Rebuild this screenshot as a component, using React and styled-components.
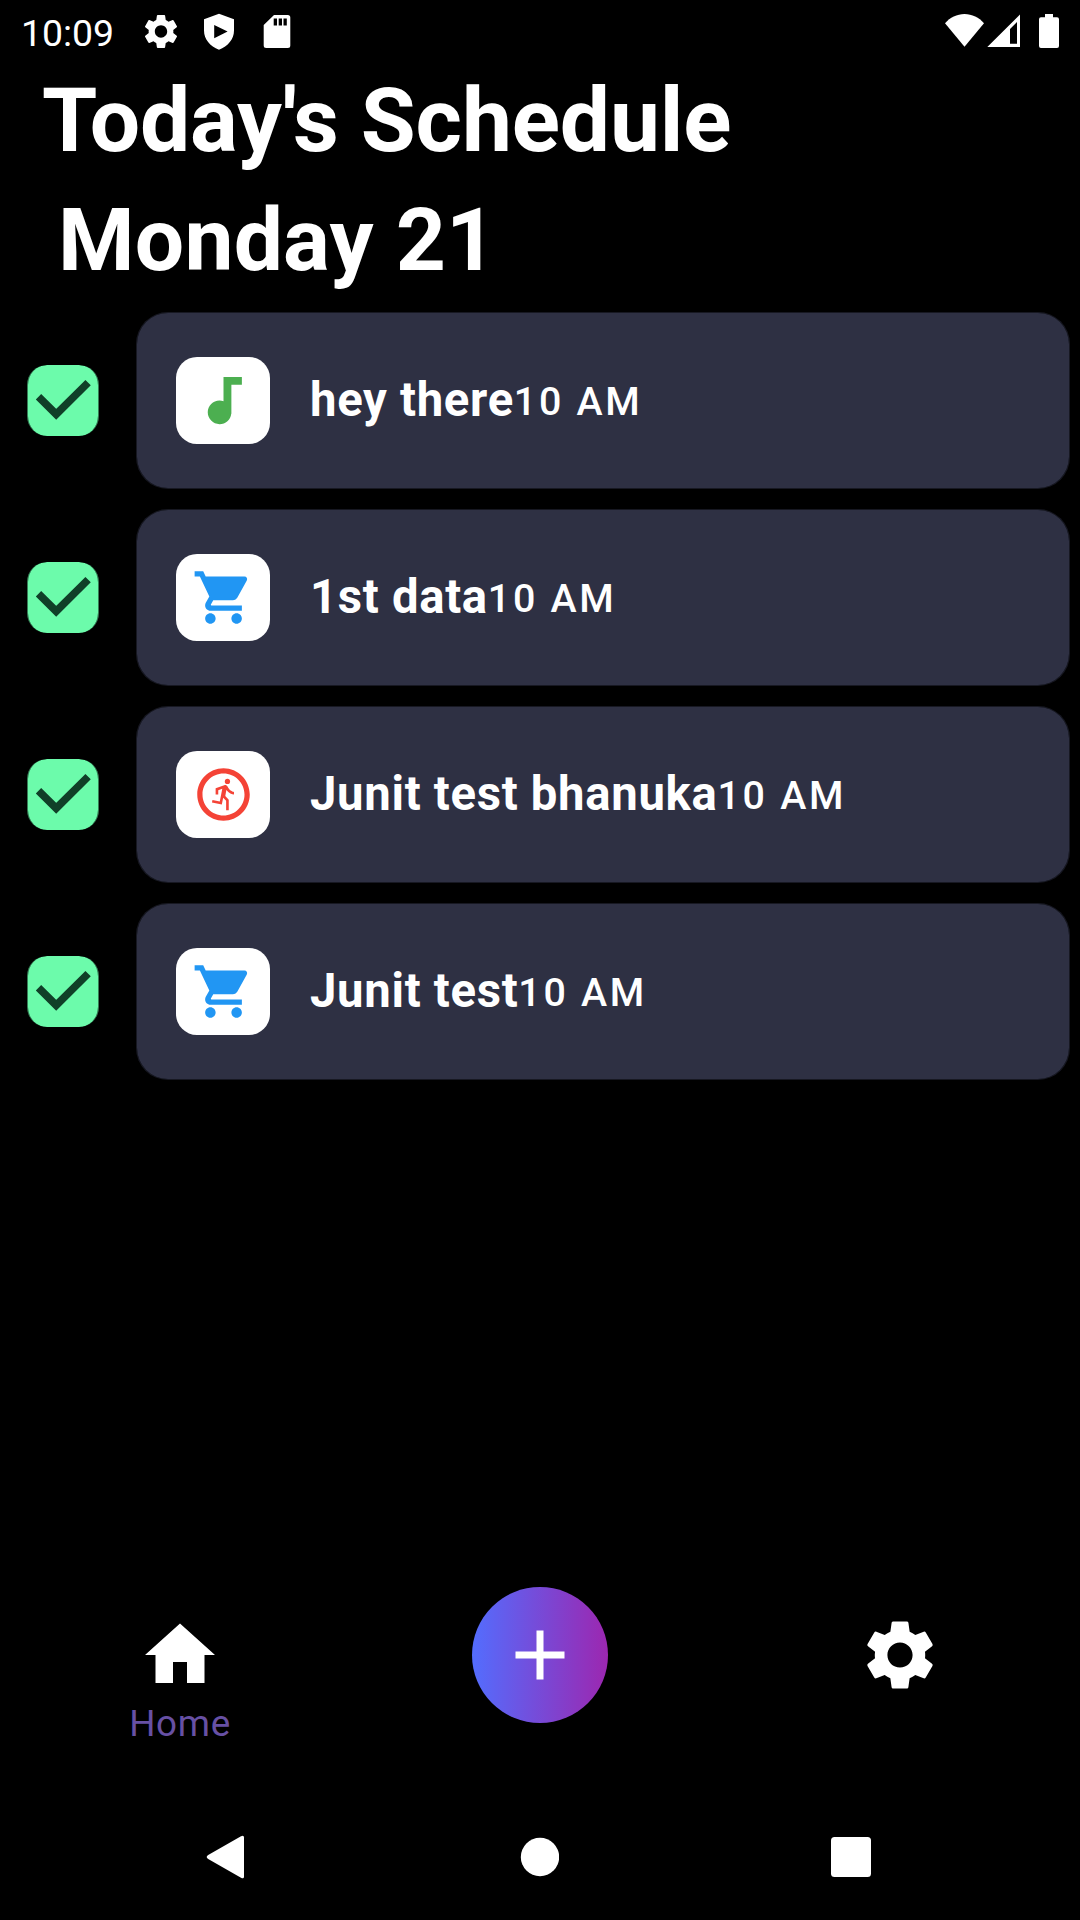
import React from "react";
import styled, { createGlobalStyle } from "styled-components";
import {
  MdAdd,
  MdAudiotrack,
  MdOutlineRunCircle,
  MdSettings,
  MdShoppingCart,
} from "react-icons/md";

const GlobalStyle = createGlobalStyle`
  *, *::before, *::after { box-sizing: border-box; }
  body { margin: 0; background: #000; }
  svg { display: block; flex: none; }
`;

const Screen = styled.div`
  width: 1080px;
  height: 1920px;
  display: flex;
  flex-direction: column;
  overflow: hidden;
  background: #000;
  color: #fff;
  font-family: Roboto, "Noto Sans", sans-serif;
`;

const StatusBar = styled.header`
  height: 63px;
  padding: 0 20px 0 21px;
  display: flex;
  justify-content: space-between;
`;

const StatusGroup = styled.div`
  display: flex;
  height: 63px;
`;

const Clock = styled.span`
  width: 119px;
  font-size: 37.4px;
  line-height: 67px;
  white-space: nowrap;
`;

const Heading = styled.h1`
  margin: 0;
  height: ${(p) => p.$height}px;
  padding-left: ${(p) => p.$inset}px;
  font-size: ${(p) => p.$size}px;
  line-height: ${(p) => p.$line}px;
  letter-spacing: ${(p) => p.$tracking}px;
  font-weight: 700;
  white-space: nowrap;
`;

const TaskList = styled.ul`
  margin: 0;
  padding: 12px 10px 0 27px;
  list-style: none;
  flex: 1;
  display: flex;
  flex-direction: column;
  gap: 20px;
`;

const TaskRow = styled.li`
  height: 177px;
  display: flex;
  align-items: center;
  gap: 37px;
`;

const CheckBox = styled.span`
  flex: none;
  width: 72px;
  height: 71px;
  border: 0 solid rgba(108, 251, 171, 0.5);
  border-width: 0 1px;
  border-radius: 20px;
  background: #6cfbab;
  background-clip: padding-box;
`;

const TaskCard = styled.div`
  flex: 1;
  height: 177px;
  padding-left: 39px;
  border: 1px solid rgba(46, 48, 67, 0.5);
  border-radius: 32px;
  background: #2e3043;
  background-clip: padding-box;
  display: flex;
  align-items: center;
`;

const IconTile = styled.span`
  flex: none;
  width: 94.4px;
  height: 86.6px;
  margin-right: 39.6px;
  border-radius: 21px;
  background: #fff;
  color: ${(p) => p.$color};
  display: flex;
  align-items: center;
  justify-content: center;
`;

const TaskName = styled.span`
  font-size: 47.25px;
  line-height: 56px;
  padding-bottom: 2px;
  font-weight: 700;
  letter-spacing: 0.7px;
  white-space: pre;
`;

const TaskTime = styled.span`
  font-size: 39.4px;
  line-height: 48px;
  padding-top: 2px;
  font-weight: 500;
  letter-spacing: 2.7px;
  white-space: pre;
`;

const BottomBar = styled.nav`
  height: 209px;
  display: grid;
  grid-template-columns: repeat(3, 360px);
  justify-items: center;
`;

const BarItem = styled.button`
  height: 209px;
  border: 0;
  padding: 28px 0 0;
  background: none;
  color: #fff;
  font-family: inherit;
  display: flex;
  flex-direction: column;
  align-items: center;
`;

const BarLabel = styled.span`
  font-size: 36.75px;
  line-height: 44px;
  margin-top: 5px;
  letter-spacing: 0.7px;
  color: #6750a4;
`;

const AddButton = styled.button`
  width: 136.5px;
  height: 136.5px;
  margin-top: 1.5px;
  border: 0;
  border-radius: 50%;
  padding: 0;
  background: linear-gradient(90deg, #536dfe, #9c27b0);
  color: #fff;
  display: flex;
  align-items: center;
  justify-content: center;
`;

const SystemNav = styled.footer`
  height: 126px;
  padding: 0 206px;
  display: flex;
  align-items: center;
  justify-content: space-between;
`;

const TASKS = [
  { name: "hey there", time: "10 AM", Icon: MdAudiotrack, color: "#4caf50" },
  { name: "1st data", time: "10 AM", Icon: MdShoppingCart, color: "#2196f3" },
  { name: "Junit test bhanuka", time: "10 AM", Icon: MdOutlineRunCircle, color: "#f44336" },
  { name: "Junit test", time: "10 AM", Icon: MdShoppingCart, color: "#2196f3" },
];

function StatusIcons() {
  return (
    <svg width="160" height="63" viewBox="140 0 160 63" fill="#fff">
      <MdSettings x="140.4" y="10.9" size="41.2" />
      <path
        fillRule="evenodd"
        d="M219 13.7L234 19.3V30.5C234 39 228 46.5 219 49.7C210 46.5 204 39 204 30.5V19.3ZM214.2 25V38.3L227.6 31.6Z"
      />
      <path
        fillRule="evenodd"
        d="M274 15H287.8Q290.3 15 290.3 17.5V45.5Q290.3 48 287.8 48H266.2Q263.7 48 263.7 45.5V25ZM273.7 18.5V25.5H277V18.5ZM278.7 18.5V25.5H282V18.5ZM283.5 18.5V25.5H286.8V18.5Z"
      />
    </svg>
  );
}

function SignalIcons() {
  return (
    <svg width="120" height="63" viewBox="940 0 120 63" fill="#fff">
      <path d="M964.5 46.8L945 23.2C950 17.5 957 14 964.5 14S979 17.5 984 23.2Z" />
      <path
        fillRule="evenodd"
        d="M1020 14.5V47H987.3ZM1017 22L1010 29V43.7H1017Z"
      />
      <path d="M1045 14H1053V17.3H1057Q1059 17.3 1059 19.3V46Q1059 48 1057 48H1041Q1039 48 1039 46V19.3Q1039 17.3 1041 17.3H1045Z" />
    </svg>
  );
}

function Task({ name, time, Icon, color }) {
  return (
    <TaskRow>
      <CheckBox role="checkbox" aria-checked="true">
        <svg width="70" height="71" viewBox="0.5 0 70 71">
          <path d="M11 31.7L28.7 49.3L60.6 17.6" fill="none" stroke="#103f28" strokeWidth="7.6" />
        </svg>
      </CheckBox>
      <TaskCard>
        <IconTile $color={color}>
          <Icon size={63} />
        </IconTile>
        <TaskName>{name}</TaskName>
        <TaskTime>{time}</TaskTime>
      </TaskCard>
    </TaskRow>
  );
}

export default function App() {
  return (
    <Screen>
      <GlobalStyle />
      <StatusBar>
        <StatusGroup>
          <Clock>10:09</Clock>
          <StatusIcons />
        </StatusGroup>
        <StatusGroup>
          <SignalIcons />
        </StatusGroup>
      </StatusBar>
      <Heading $height={118} $line={116} $inset={42} $size={89.25} $tracking={-0.12}>
        Today's Schedule
      </Heading>
      <Heading $height={119} $line={119} $inset={58} $size={87.5} $tracking={0.2}>
        Monday 21
      </Heading>
      <TaskList>
        {TASKS.map((task, i) => (
          <Task key={i} {...task} />
        ))}
      </TaskList>
      <BottomBar>
        <BarItem>
          <svg width="84" height="84" viewBox="0 0 24 24" fill="#fff">
            <path d="M10 20v-6h4v6h5v-8h3L12 3 2 12h3v8z" />
          </svg>
          <BarLabel>Home</BarLabel>
        </BarItem>
        <AddButton aria-label="Add">
          <MdAdd size={84} />
        </AddButton>
        <BarItem aria-label="Settings">
          <MdSettings size={84} />
        </BarItem>
      </BottomBar>
      <SystemNav>
        <svg width="40" height="44" viewBox="0 0 40 44" fill="#fff">
          <path d="M35 1.2Q38 -0.4 38 2.5V41.5Q38 44.4 35 42.8L2.2 24Q-0.8 22 2.2 20Z" />
        </svg>
        <svg width="40" height="40" viewBox="0 0 40 40" fill="#fff">
          <circle cx="21" cy="20" r="19.2" />
        </svg>
        <svg width="43" height="40" viewBox="0 0 43 40" fill="#fff">
          <rect width="40" height="40" rx="3.5" />
        </svg>
      </SystemNav>
    </Screen>
  );
}
